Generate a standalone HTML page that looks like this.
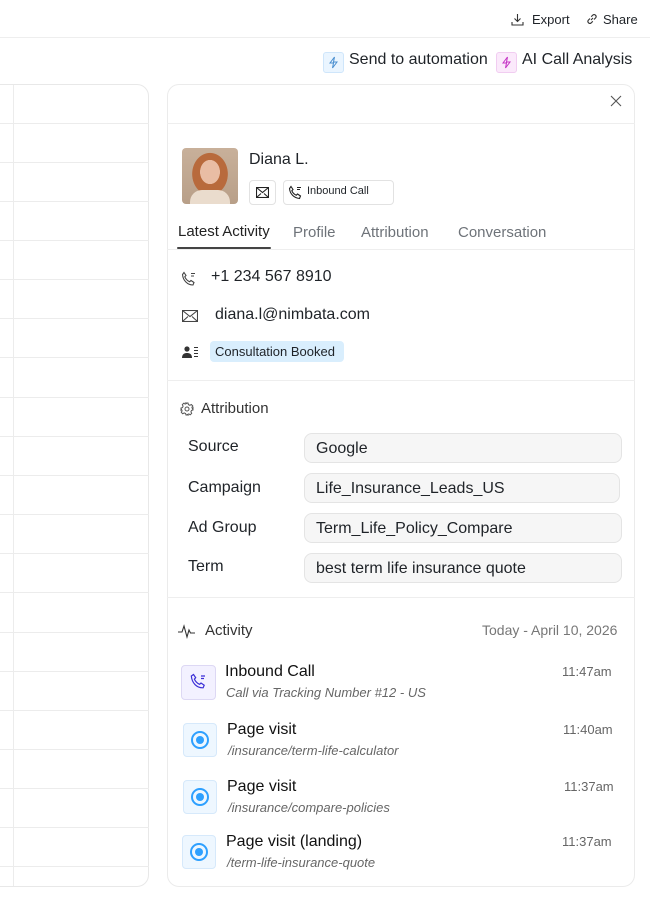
<!DOCTYPE html>
<html><head><meta charset="utf-8"><style>
*{box-sizing:border-box;margin:0;padding:0}
body{width:650px;height:900px;background:#fff;font-family:"Liberation Sans",sans-serif;color:#1f2328;position:relative;overflow:hidden}
.a{position:absolute;white-space:nowrap}
.hl{position:absolute;left:0;width:149px;height:1px;background:#ececec}
.field{position:absolute;left:304px;width:318px;height:30px;background:#f6f6f6;border:1px solid #e4e4e4;border-radius:8px;font-size:16px;padding:6px 0 0 11px}
.lbl{position:absolute;left:188px;font-size:16px}
.ib{position:absolute;left:183px;width:34px;height:34px;border-radius:4px;background:#eef7ff;border:1px solid #d6e9fb}
.ib::after{content:"";position:absolute;left:7px;top:7px;width:18px;height:18px;border:2px solid #2ea0ff;border-radius:50%;box-sizing:border-box}
.ib::before{content:"";position:absolute;left:12px;top:12px;width:8px;height:8px;background:#2ea0ff;border-radius:50%}
.t{position:absolute;font-size:16px;color:#111}
.s{position:absolute;font-size:13px;font-style:italic;color:#666}
.tm{position:absolute;font-size:13px;color:#666}
</style></head><body>
<div style="position:absolute;left:0;top:37px;width:650px;height:1px;background:#eee"></div>
<svg class="a" style="left:511px;top:13px" width="13" height="13" viewBox="0 0 13 13" fill="none" stroke="#333" stroke-width="1.1"><path d="M6.5 1v7M3.5 5.5l3 3 3-3M1 9v3h11V9"/></svg>
<div class="a" style="left:532px;top:12px;font-size:13px">Export</div>
<svg class="a" style="left:586px;top:13px" width="12" height="12" viewBox="0 0 12 12" fill="none" stroke="#333" stroke-width="1.1"><path d="M5 7l2-2M4 5.5L2.3 7.2a2 2 0 0 0 2.8 2.8L6.8 8.3M8 6.5l1.7-1.7a2 2 0 0 0-2.8-2.8L5.2 3.7"/></svg>
<div class="a" style="left:603px;top:12px;font-size:13px">Share</div>

<div class="a" style="left:323px;top:52px;width:21px;height:21px;background:#eaf5ff;border:1px solid #cfe6fb;border-radius:3px"></div>
<svg class="a" style="left:327px;top:56px" width="13" height="13" viewBox="0 0 13 13" fill="none" stroke="#4a8fd0" stroke-width="1"><path d="M7.5 1L3 7h3.5L5.5 12 10 6H6.5z"/></svg>
<div class="a" style="left:349px;top:51px;font-size:16px">Send to automation</div>
<div class="a" style="left:496px;top:52px;width:21px;height:21px;background:#fbe9fb;border:1px solid #f1cdf1;border-radius:3px"></div>
<svg class="a" style="left:500px;top:56px" width="13" height="13" viewBox="0 0 13 13" fill="none" stroke="#c534c5" stroke-width="1"><path d="M7.5 1L3 7h3.5L5.5 12 10 6H6.5z"/></svg>
<div class="a" style="left:522px;top:51px;font-size:16px">AI Call Analysis</div>

<!-- left table -->
<div style="position:absolute;left:-20px;top:84px;width:169px;height:803px;border:1px solid #e8e8e8;border-radius:12px;overflow:hidden">
<div style="position:absolute;left:32px;top:0;width:1px;height:100%;background:#ececec"></div>
</div>
<div class="hl" style="top:123px"></div><div class="hl" style="top:162px"></div><div class="hl" style="top:201px"></div><div class="hl" style="top:240px"></div><div class="hl" style="top:279px"></div><div class="hl" style="top:318px"></div><div class="hl" style="top:357px"></div><div class="hl" style="top:397px"></div><div class="hl" style="top:436px"></div><div class="hl" style="top:475px"></div><div class="hl" style="top:514px"></div><div class="hl" style="top:553px"></div><div class="hl" style="top:592px"></div><div class="hl" style="top:632px"></div><div class="hl" style="top:671px"></div><div class="hl" style="top:710px"></div><div class="hl" style="top:749px"></div><div class="hl" style="top:788px"></div><div class="hl" style="top:827px"></div><div class="hl" style="top:866px"></div>

<!-- right panel -->
<div style="position:absolute;left:167px;top:84px;width:468px;height:803px;border:1px solid #ebebeb;border-radius:12px"></div>
<svg class="a" style="left:610px;top:95px" width="12" height="12" viewBox="0 0 12 12" stroke="#555" stroke-width="1.1"><path d="M1 1l10 10M11 1L1 11"/></svg>
<div class="a" style="left:167px;top:123px;width:468px;height:1px;background:#eee"></div>

<div class="a" style="left:182px;top:148px;width:56px;height:56px;border-radius:4px;background:radial-gradient(ellipse 14px 17px at 28px 24px,#e9bda4 70%,transparent 72%),radial-gradient(ellipse 22px 26px at 28px 26px,#b86a3c 80%,transparent 82%),linear-gradient(#c8b09a,#b89f88);overflow:hidden"><div style="position:absolute;left:8px;top:42px;width:40px;height:20px;background:#eadccd;border-radius:12px 12px 0 0"></div></div>
<div class="a" style="left:249px;top:151px;font-size:16px">Diana L.</div>
<div class="a" style="left:249px;top:180px;width:27px;height:25px;border:1px solid #e2e2e2;border-radius:4px"></div>
<svg class="a" style="left:256px;top:187px" width="13" height="11" viewBox="0 0 13 11" fill="none" stroke="#222" stroke-width="1.1"><rect x=".5" y=".5" width="12" height="10"/><path d="M.5 .5l6 5 6-5M.5 10.5l4.5-4M12.5 10.5L8 6.5"/></svg>
<div class="a" style="left:283px;top:180px;width:111px;height:25px;border:1px solid #e2e2e2;border-radius:4px"></div>
<svg class="a" style="left:288px;top:185px" width="15" height="15" viewBox="0 0 15 15" fill="none" stroke="#222" stroke-width="1.1"><path d="M3 1.5l2 3-1.2 1.2c.8 2 2.5 3.7 4.5 4.5L9.5 9l3 2-1 2.5C6 13 2 9 1.5 3.5z M9 2.5h4M9 4.5h3"/></svg>
<div class="a" style="left:307px;top:185px;font-size:11px">Inbound Call</div>

<div class="a" style="left:178px;top:223px;font-size:15px;color:#222">Latest Activity</div>
<div class="a" style="left:293px;top:224px;font-size:15px;color:#6e7379">Profile</div>
<div class="a" style="left:361px;top:224px;font-size:15px;color:#6e7379">Attribution</div>
<div class="a" style="left:458px;top:224px;font-size:15px;color:#6e7379">Conversation</div>
<div class="a" style="left:167px;top:249px;width:468px;height:1px;background:#eee"></div>
<div class="a" style="left:177px;top:247px;width:94px;height:2px;background:#444;border-radius:1px"></div>

<svg class="a" style="left:181px;top:271px" width="16" height="16" viewBox="0 0 16 16" fill="none" stroke="#444" stroke-width="1.1"><path d="M3 1.5l2 3-1.2 1.3c.9 2.2 2.7 4 4.9 4.9L10 9.5l3 2-1 2.5C6.5 14 2 9.5 1.5 3.5z M10 2.5h4M10 5h3"/></svg>
<div class="a" style="left:211px;top:268px;font-size:16px">+1 234 567 8910</div>
<svg class="a" style="left:182px;top:310px" width="16" height="12" viewBox="0 0 16 12" fill="none" stroke="#444" stroke-width="1.1"><rect x=".5" y=".5" width="15" height="11"/><path d="M.5 .5l7.5 6 7.5-6M.5 11.5l5.5-5M15.5 11.5l-5.5-5"/></svg>
<div class="a" style="left:215px;top:306px;font-size:16px">diana.l@nimbata.com</div>
<svg class="a" style="left:182px;top:346px" width="17" height="12" viewBox="0 0 17 12" fill="#333"><circle cx="5" cy="3" r="2.6"/><path d="M0 12c0-4 2.5-5 5-5s5 1 5 5z"/><rect x="12" y="1" width="4" height="1"/><rect x="12" y="4" width="4" height="1"/><rect x="12" y="7" width="4" height="1"/><rect x="12" y="10" width="4" height="1"/></svg>
<div class="a" style="left:210px;top:341px;width:134px;height:21px;background:#d9eefd;border-radius:4px;font-size:13px;padding:3px 0 0 5px">Consultation Booked</div>
<div class="a" style="left:167px;top:380px;width:468px;height:1px;background:#eee"></div>

<svg class="a" style="left:180px;top:402px" width="14" height="14" viewBox="0 0 14 14" fill="none" stroke="#555" stroke-width="1"><circle cx="7" cy="7" r="2"/><path d="M6 1h2l.4 1.6 1.4.7 1.5-.8 1.4 1.4-.8 1.5.6 1.4L13 6v2l-1.5.4-.6 1.4.8 1.5-1.4 1.4-1.5-.8-1.4.6L8 13H6l-.4-1.5-1.4-.6-1.5.8-1.4-1.4.8-1.5-.6-1.4L1 8V6l1.5-.4.6-1.4-.8-1.5 1.4-1.4 1.5.8 1.4-.7z"/></svg>
<div class="a" style="left:201px;top:400px;font-size:15px;color:#333">Attribution</div>
<div class="lbl" style="top:438px">Source</div><div class="field" style="top:433px">Google</div>
<div class="lbl" style="top:479px">Campaign</div><div class="field" style="top:473px;width:316px">Life_Insurance_Leads_US</div>
<div class="lbl" style="top:519px">Ad Group</div><div class="field" style="top:513px">Term_Life_Policy_Compare</div>
<div class="lbl" style="top:558px">Term</div><div class="field" style="top:553px">best term life insurance quote</div>
<div class="a" style="left:167px;top:597px;width:468px;height:1px;background:#eee"></div>

<svg class="a" style="left:178px;top:623px" width="20" height="16" viewBox="0 0 20 16" fill="none" stroke="#333" stroke-width="1.1"><path d="M0 9h4l2-6 3 11 2-7 1.5 3H17"/></svg>
<div class="a" style="left:205px;top:622px;font-size:15px;color:#333">Activity</div>
<div class="a" style="left:482px;top:622px;font-size:14px;color:#777">Today - April 10, 2026</div>

<div class="a" style="left:181px;top:665px;width:35px;height:35px;border-radius:4px;background:#f3f1ff;border:1px solid #ddd8f4"></div>
<svg class="a" style="left:190px;top:673px" width="17" height="17" viewBox="0 0 17 17" fill="none" stroke="#3b2fd6" stroke-width="1.2"><path d="M3.5 1.5l2.2 3.2-1.3 1.4c1 2.3 2.9 4.2 5.2 5.2l1.4-1.3 3.2 2.2-1.1 2.6C6.8 15 2 10.2 1.3 3z M11 3h4M11 5.5h3"/></svg>
<div class="t" style="left:225px;top:663px">Inbound Call</div>
<div class="s" style="left:226px;top:685px">Call via Tracking Number #12 - US</div>
<div class="tm" style="left:562px;top:664px">11:47am</div>

<div class="ib" style="top:723px"></div>
<div class="t" style="left:227px;top:721px">Page visit</div>
<div class="s" style="left:228px;top:743px">/insurance/term-life-calculator</div>
<div class="tm" style="left:563px;top:722px">11:40am</div>

<div class="ib" style="top:780px"></div>
<div class="t" style="left:227px;top:778px">Page visit</div>
<div class="s" style="left:228px;top:800px">/insurance/compare-policies</div>
<div class="tm" style="left:564px;top:779px">11:37am</div>

<div class="ib" style="top:835px;left:182px"></div>
<div class="t" style="left:226px;top:833px">Page visit (landing)</div>
<div class="s" style="left:227px;top:855px">/term-life-insurance-quote</div>
<div class="tm" style="left:562px;top:834px">11:37am</div>
</body></html>
